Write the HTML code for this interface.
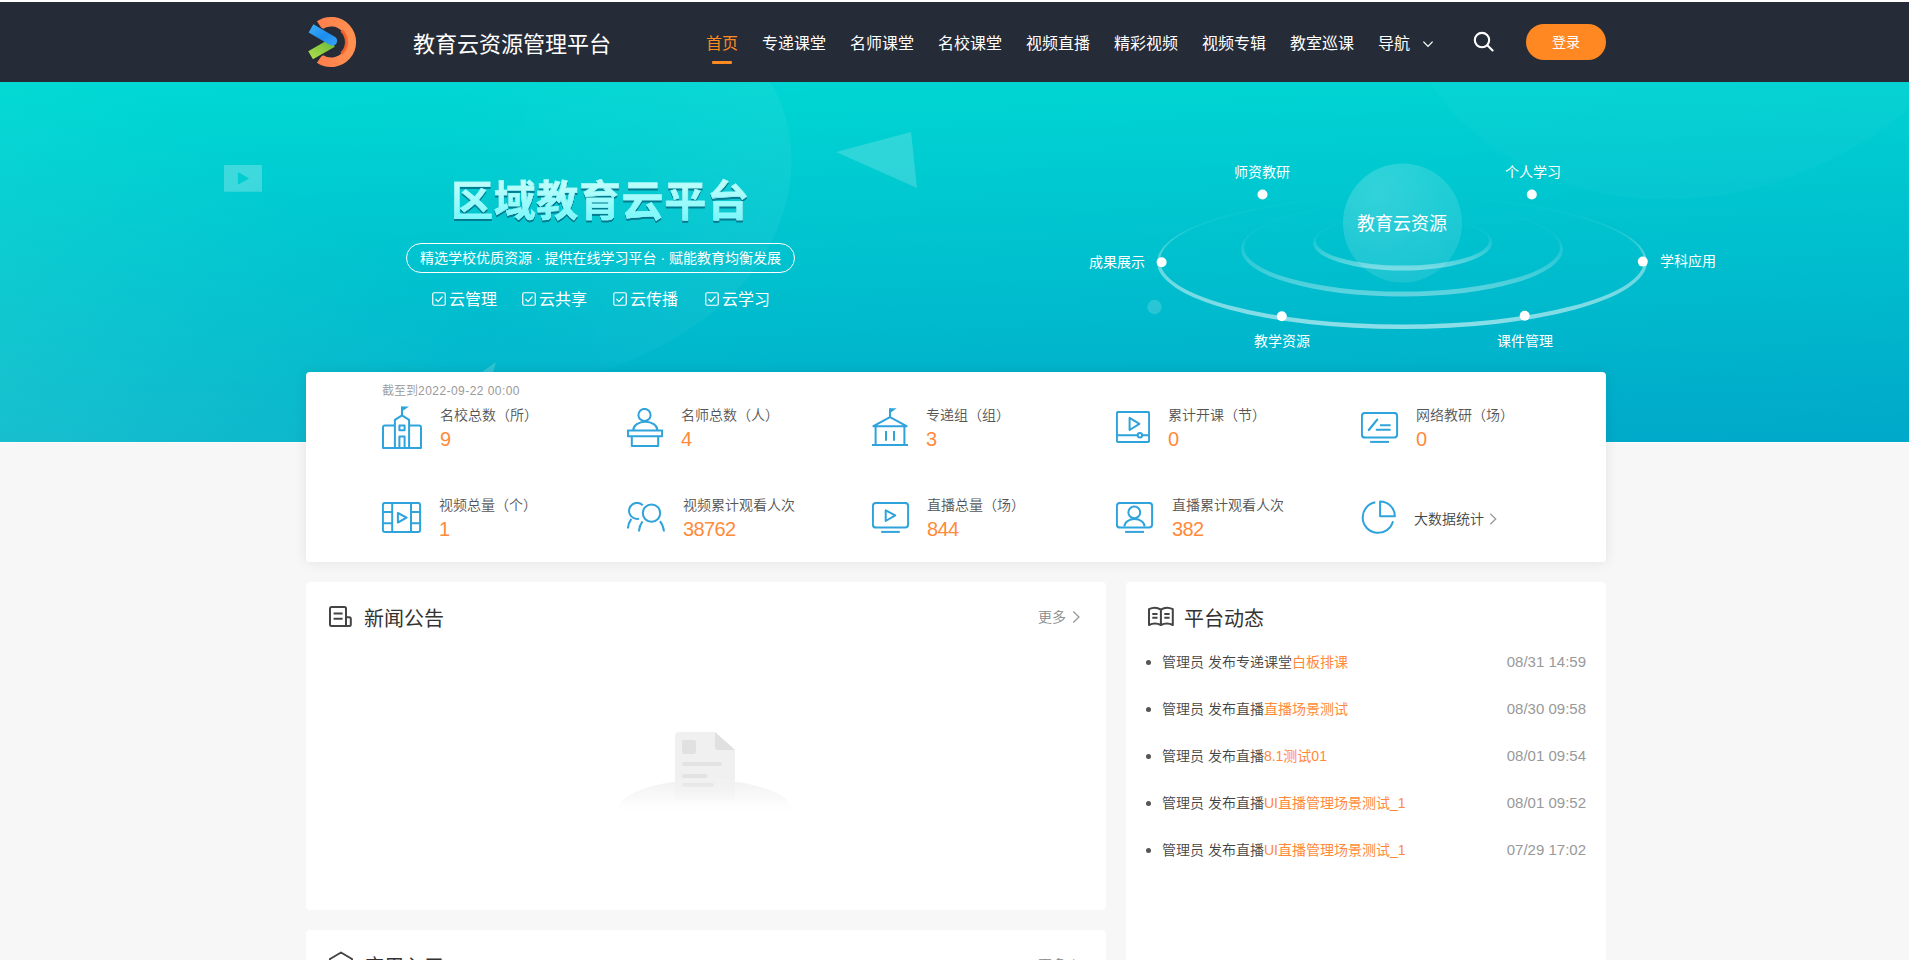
<!DOCTYPE html>
<html lang="zh-CN">
<head>
<meta charset="utf-8">
<title>教育云资源管理平台</title>
<style>
*{box-sizing:border-box;margin:0;padding:0}
html,body{width:1909px;height:960px;overflow:hidden;background:#f7f7f7}
body{position:relative;font-family:"Liberation Sans","Noto Sans CJK SC",sans-serif;color:#333;font-size:14px}
.abs{position:absolute}
#hdr{position:absolute;left:0;top:2px;width:1909px;height:80px;background:#252b37}
#topline{position:absolute;left:0;top:0;width:1909px;height:2px;background:#fff}
#title{position:absolute;left:413px;top:3px;height:80px;line-height:80px;font-size:22px;color:#fff;white-space:nowrap}
.nav{position:absolute;top:2px;height:80px;line-height:80px;font-size:16px;color:#fff;white-space:nowrap}
.nav.on{color:#ff8a22}
#navline{position:absolute;left:712px;top:59px;width:20px;height:3px;background:#ff8a22;border-radius:1px}
#login{position:absolute;left:1526px;top:22px;width:80px;height:36px;border-radius:18px;background:#ff8822;color:#fff;font-size:14px;line-height:36px;text-align:center}
#banner{position:absolute;left:0;top:82px;width:1909px;height:360px;overflow:hidden;background:linear-gradient(32deg,rgba(120,255,220,.2) 0%,rgba(120,255,220,.07) 17%,rgba(120,255,220,0) 28%),linear-gradient(178deg,#00d9d4 0%,#00a8c9 100%)}
#btitle{position:absolute;left:451px;top:92px;font-size:42px;font-weight:700;line-height:56px;white-space:nowrap;letter-spacing:.65px;color:#a0fbfa;background:linear-gradient(180deg,#bcfdfb 12px,#78f7fb 46px);-webkit-background-clip:text;background-clip:text;-webkit-text-fill-color:transparent;-webkit-text-stroke:.5px #9afafb;filter:drop-shadow(.5px 2.200px 0 rgba(0,70,100,.6))}
#pill{position:absolute;left:406px;top:161px;width:389px;height:30px;border:1px solid #fff;border-radius:15px;color:#fff;font-size:14px;line-height:28px;text-align:center;white-space:nowrap}
.ck{position:absolute;top:205.500px;height:24px;line-height:24px;font-size:16px;color:#fff;white-space:nowrap}
.lbl{position:absolute;font-size:14px;line-height:20px;color:#fff;white-space:nowrap}
.dot{position:absolute;width:10px;height:10px;border-radius:50%;background:#fff}
#stats{position:absolute;left:306px;top:372px;width:1300px;height:190px;background:#fff;border-radius:4px;box-shadow:0 0 14px rgba(0,0,0,.085)}
.card{position:absolute;background:#fff;border-radius:4px}
.st-t{position:absolute;font-weight:350;font-size:14px;line-height:20px;color:#555;white-space:nowrap}
.st-n{position:absolute;font-size:20px;letter-spacing:-.6px;line-height:24px;color:#ff8a3a;white-space:nowrap}
.ico{position:absolute}
.h2{position:absolute;font-size:20px;line-height:28px;color:#333;white-space:nowrap}
.more{position:absolute;font-weight:350;font-size:14px;line-height:20px;color:#888;white-space:nowrap}
.li{position:absolute;left:36px;font-weight:350;font-size:14px;line-height:20px;color:#444;white-space:nowrap}
.li b{font-weight:400;color:#ff8a3a}
.li:before{content:"";position:absolute;left:-16.500px;top:8px;width:5px;height:5px;border-radius:50%;background:#555}
.tm{position:absolute;right:20px;font-size:15px;line-height:20px;color:#999;white-space:nowrap}
</style>
</head>
<body>
<div id="topline"></div>
<div id="hdr">
  <svg class="abs" style="left:304px;top:12px" width="60" height="60" viewBox="304 14 60 60">
    <defs>
      <linearGradient id="gO" x1="0" y1="0" x2="1" y2="0"><stop offset="0" stop-color="#ff7f4d"/><stop offset="1" stop-color="#ff9050"/></linearGradient>
      <linearGradient id="gB" x1="0" y1="0" x2="1" y2="1"><stop offset="0" stop-color="#3fb0f7"/><stop offset=".55" stop-color="#1c8def"/><stop offset="1" stop-color="#3aa5f5"/></linearGradient>
      <linearGradient id="gG" x1="0" y1="1" x2="1" y2="0"><stop offset="0" stop-color="#a6da48"/><stop offset="1" stop-color="#6fbb3a"/></linearGradient>
    </defs>
    <path d="M319.6 25.2 A20.3 20.3 0 1 1 319.6 58.8" fill="none" stroke="url(#gO)" stroke-width="9.6"/>
    <path d="M341.5 30.5 A15.6 15.6 0 0 1 341.5 53.5" fill="none" stroke="#f9642c" stroke-width="3.2" opacity=".9"/>
    <path d="M310.6 55.3 L331.5 43.2" fill="none" stroke="#252b37" stroke-width="12.6"/>
    <path d="M312.4 22.5 L335.6 35.9 A5.9 5.9 0 0 1 329.6 46.2 L306.4 32.8 Z" fill="#252b37"/>
    <path d="M310.6 55.3 L332.5 42.6" fill="none" stroke="url(#gG)" stroke-width="9.4"/>
    <path d="M313.4 24.2 L334.8 36.7 A4.7 4.7 0 0 1 330 44.9 L308.6 32.4 Z" fill="url(#gB)"/>
  </svg>
  <svg class="abs" style="left:1470px;top:26px" width="28" height="28" viewBox="1470 28 28 28"><circle cx="1482" cy="40.1" r="7.2" fill="none" stroke="#fff" stroke-width="2.1"/><path d="M1487.3 45.2L1492.6 50.4" stroke="#fff" stroke-width="2.1" stroke-linecap="round"/></svg>
  <svg class="abs" style="left:1420px;top:36px" width="16" height="12" viewBox="1420 38 16 12"><path d="M1423.4 41.6L1428 46.4L1432.6 41.6" fill="none" stroke="#fff" stroke-width="1.3"/></svg>
  <div id="title">教育云资源管理平台</div>
  <div class="nav on" style="left:706px">首页</div>
  <div class="nav" style="left:762px">专递课堂</div>
  <div class="nav" style="left:850px">名师课堂</div>
  <div class="nav" style="left:938px">名校课堂</div>
  <div class="nav" style="left:1026px">视频直播</div>
  <div class="nav" style="left:1114px">精彩视频</div>
  <div class="nav" style="left:1202px">视频专辑</div>
  <div class="nav" style="left:1290px">教室巡课</div>
  <div class="nav" style="left:1378px">导航</div>
  <div id="navline"></div>
  <div id="login">登录</div>
</div>
<div id="banner">
  <svg class="abs" style="left:0;top:0" width="1909" height="360" viewBox="0 82 1909 360">
    <defs>
      <linearGradient id="blob" x1="0" y1="0" x2="1" y2="0"><stop offset="0" stop-color="#fff" stop-opacity="0"/><stop offset=".5" stop-color="#fff" stop-opacity=".0"/><stop offset="1" stop-color="#fff" stop-opacity=".05"/></linearGradient>
      <linearGradient id="ringO" x1="0" y1="0" x2="0" y2="1"><stop offset="0" stop-color="#fff" stop-opacity="0"/><stop offset=".2" stop-color="#fff" stop-opacity=".05"/><stop offset=".55" stop-color="#fff" stop-opacity=".4"/><stop offset="1" stop-color="#fff" stop-opacity=".55"/></linearGradient>
      <linearGradient id="ringM" x1="0" y1="0" x2="0" y2="1"><stop offset="0" stop-color="#fff" stop-opacity="0"/><stop offset=".35" stop-color="#fff" stop-opacity=".04"/><stop offset="1" stop-color="#fff" stop-opacity=".38"/></linearGradient>
      <radialGradient id="sph" cx=".3" cy=".25" r=".85"><stop offset="0" stop-color="#fff" stop-opacity=".2"/><stop offset=".6" stop-color="#fff" stop-opacity=".13"/><stop offset="1" stop-color="#fff" stop-opacity=".1"/></radialGradient>
      <linearGradient id="ringI" x1="0" y1="0" x2="0" y2="1"><stop offset="0" stop-color="#fff" stop-opacity="0"/><stop offset=".4" stop-color="#fff" stop-opacity=".05"/><stop offset="1" stop-color="#fff" stop-opacity=".42"/></linearGradient>
      <filter id="soft" x="-5%" y="-5%" width="110%" height="110%"><feGaussianBlur stdDeviation=".7"/></filter>
    </defs>
    <path d="M770 82 C800 130 800 200 760 262 C700 350 560 400 430 400 C250 400 110 330 100 210 C95 150 130 100 170 82 Z" fill="url(#blob)"/>
    <path d="M1430 82 C1500 200 1720 260 1909 110 L1909 82 Z" fill="#fff" opacity=".025"/>
    <path fill-rule="evenodd" d="M224 165 H262 V191.800 H224 Z M238.800 172.600 Q237.900 172.100 237.900 173.200 V183.700 Q237.900 184.800 238.800 184.300 L248.300 178.900 Q249 178.450 248.300 178 Z" fill="#fff" opacity=".24"/>
    <path d="M836 152 L911 132 L917 188 Z" fill="#fff" opacity=".18"/>
    <path d="M482 372 L496 362 L493 372 Z" fill="#fff" opacity=".18"/>
    <circle cx="1154.500" cy="307" r="7.200" fill="#fff" opacity=".16"/>
    <g filter="url(#soft)">
    <path fill-rule="evenodd" fill="url(#ringO)" d="M1157 262 a245 67 0 1 0 490 0 a245 67 0 1 0 -490 0 Z M1160 260.750 a242 63.750 0 1 0 484 0 a242 63.750 0 1 0 -484 0 Z"/>
    <path fill-rule="evenodd" fill="url(#ringM)" d="M1241 249 a161 47.500 0 1 0 322 0 a161 47.500 0 1 0 -322 0 Z M1244 247.500 a158 44 0 1 0 316 0 a158 44 0 1 0 -316 0 Z"/>
    </g>
    <circle cx="1402.500" cy="223" r="59.500" fill="url(#sph)"/>
    <g filter="url(#soft)">
    <path fill-rule="evenodd" fill="url(#ringI)" d="M1313 242.500 a89.500 28 0 1 0 179 0 a89.500 28 0 1 0 -179 0 Z M1316 241 a86.500 24.500 0 1 0 173 0 a86.500 24.500 0 1 0 -173 0 Z"/>
    </g>
    <g fill="#fff"><circle cx="1262.500" cy="194.500" r="5"/><circle cx="1531.800" cy="194.500" r="5"/><circle cx="1161.600" cy="262.200" r="5"/><circle cx="1642.800" cy="261.600" r="5"/><circle cx="1281.800" cy="316.300" r="5"/><circle cx="1524.700" cy="315.800" r="5"/></g>
  </svg>
  <div class="lbl" style="left:1202px;width:120px;text-align:center;top:80px">师资教研</div>
  <div class="lbl" style="left:1473px;width:120px;text-align:center;top:80px">个人学习</div>
  <div class="lbl" style="left:1000px;width:145px;text-align:right;top:170px">成果展示</div>
  <div class="lbl" style="left:1660px;top:169px">学科应用</div>
  <div class="lbl" style="left:1222px;width:120px;text-align:center;top:249px">教学资源</div>
  <div class="lbl" style="left:1465px;width:120px;text-align:center;top:249px">课件管理</div>
  <div class="lbl" style="left:1342px;width:120px;text-align:center;top:129px;font-size:18px;line-height:26px">教育云资源</div>
  <div id="btitle">区域教育云平台</div>
  <div id="pill">精选学校优质资源 · 提供在线学习平台 · 赋能教育均衡发展</div>
  <div class="ck" style="left:432px"><svg width="14" height="14" viewBox="0 0 14 14" style="vertical-align:-1px;margin-right:3px"><rect x=".75" y=".75" width="12.500" height="12.500" rx="1.500" fill="none" stroke="#fff" stroke-width="1.200"/><path d="M3.500 7 L6 9.600 L10.500 4.500" fill="none" stroke="#fff" stroke-width="1.200"/></svg>云管理</div>
  <div class="ck" style="left:522px"><svg width="14" height="14" viewBox="0 0 14 14" style="vertical-align:-1px;margin-right:3px"><rect x=".75" y=".75" width="12.500" height="12.500" rx="1.500" fill="none" stroke="#fff" stroke-width="1.200"/><path d="M3.500 7 L6 9.600 L10.500 4.500" fill="none" stroke="#fff" stroke-width="1.200"/></svg>云共享</div>
  <div class="ck" style="left:613px"><svg width="14" height="14" viewBox="0 0 14 14" style="vertical-align:-1px;margin-right:3px"><rect x=".75" y=".75" width="12.500" height="12.500" rx="1.500" fill="none" stroke="#fff" stroke-width="1.200"/><path d="M3.500 7 L6 9.600 L10.500 4.500" fill="none" stroke="#fff" stroke-width="1.200"/></svg>云传播</div>
  <div class="ck" style="left:705px"><svg width="14" height="14" viewBox="0 0 14 14" style="vertical-align:-1px;margin-right:3px"><rect x=".75" y=".75" width="12.500" height="12.500" rx="1.500" fill="none" stroke="#fff" stroke-width="1.200"/><path d="M3.500 7 L6 9.600 L10.500 4.500" fill="none" stroke="#fff" stroke-width="1.200"/></svg>云学习</div>
</div>
<div class="abs" style="left:0;top:442px;width:1909px;height:1px;background:#fdfbfa"></div>
<div id="stats">
  <svg class="ico" style="left:76px;top:34px" width="40" height="44" viewBox="0 0 40 44" fill="none" stroke="#2fa3dc" stroke-width="2" stroke-linejoin="round"><path d="M20 0.500 L27 0.500 L21.700 4.200 L20 4.200 Z" fill="#2fa3dc" stroke="none"/><path d="M20 0.500 V9.500"/><path d="M12.900 42 V13.900 L20 9.300 L27.100 13.900 V42"/><path d="M12.900 19.600 H2.900 Q1 19.600 1 21.500 V42 H39 V21.500 Q39 19.600 37.100 19.600 H27.100"/><rect x="17.400" y="19.600" width="5.200" height="4.600"/><path d="M17.400 42 V30.600 H22.600 V42"/></svg>
  <svg class="ico" style="left:321px;top:36px" width="36" height="40" viewBox="0 0 36 40" fill="none" stroke="#2fa3dc" stroke-width="2" stroke-linejoin="round"><circle cx="17.500" cy="7" r="6.100"/><path d="M6.300 22 A11.600 8 0 0 1 30.300 22"/><rect x="0.900" y="22.400" width="34.200" height="5.800"/><path d="M4.800 28.200 V38.100 H31.200 V28.200"/></svg>
  <svg class="ico" style="left:566px;top:36px" width="36" height="39" viewBox="0 0 36 39" fill="none" stroke="#2fa3dc" stroke-width="2" stroke-linejoin="round"><path d="M18 0.200 L24.600 0.200 L19.600 3.900 L18 3.900 Z" fill="#2fa3dc" stroke="none"/><path d="M18 0.200 V9"/><path d="M18 9.200 L1.400 18.200 H34.600 Z"/><path d="M3.600 18.200 V37 M32.400 18.200 V37 M0 37.100 H36 M14 23 V32.700 M22 23 V32.700"/></svg>
  <svg class="ico" style="left:810px;top:39px" width="34" height="33" viewBox="0 0 34 33" fill="none" stroke="#2fa3dc" stroke-width="2" stroke-linejoin="round"><rect x="0.900" y="0.900" width="32.200" height="30.200" rx="1.600"/><path d="M13.600 6.800 V19 L23.400 12.900 Z"/><path d="M1 24.200 H21.600 M26.200 24.200 H33"/><circle cx="23.900" cy="24.200" r="2.200"/></svg>
  <svg class="ico" style="left:1055px;top:40px" width="38" height="32" viewBox="0 0 38 32" fill="none" stroke="#2fa3dc" stroke-width="2" stroke-linejoin="round"><rect x="0.900" y="0.900" width="35.200" height="24.600" rx="3"/><path d="M9.100 29.900 H28" stroke-width="2"/><path d="M7.800 18 L16.200 7.600" stroke-width="2.200" stroke-linecap="round"/><path d="M19 13.200 H29.600 M14.800 17.800 H29.600" stroke-width="2"/></svg>
  <svg class="ico" style="left:76px;top:130px" width="40" height="32" viewBox="0 0 40 32" fill="none" stroke="#2fa3dc" stroke-width="2" stroke-linejoin="round"><rect x="0.900" y="0.900" width="37.200" height="29.200" rx="2"/><path d="M10.200 1 V30 M29 1 V30 M1 10 H10.200 M1 21.300 H10.200 M29 10 H38 M29 21.300 H38"/><path d="M15.900 11 V20.500 L24.600 15.700 Z" stroke-width="2"/></svg>
  <svg class="ico" style="left:321px;top:130px" width="39" height="31" viewBox="0 0 39 31" fill="none" stroke="#2fa3dc" stroke-width="2" stroke-linejoin="round"><circle cx="24.500" cy="11.100" r="8.700"/><path d="M15.700 3.200 A8 8 0 1 0 12.200 16.600"/><path d="M11.900 29.500 Q12.400 23.500 15.500 19.400 M37 29.500 Q36.400 23.500 33 19.200 M0.900 26.500 Q1.400 20.800 4.300 16.800" stroke-linecap="butt"/></svg>
  <svg class="ico" style="left:566px;top:130px" width="38" height="32" viewBox="0 0 38 32" fill="none" stroke="#2fa3dc" stroke-width="2" stroke-linejoin="round"><rect x="0.900" y="0.900" width="35.200" height="24.600" rx="3"/><path d="M9.200 29.900 H27.800" stroke-width="2"/><path d="M13.700 8.400 V19 L23.300 13.400 Z" stroke-width="2"/></svg>
  <svg class="ico" style="left:810px;top:130px" width="38" height="32" viewBox="0 0 38 32" fill="none" stroke="#2fa3dc" stroke-width="2" stroke-linejoin="round"><rect x="0.900" y="0.900" width="35.200" height="24.600" rx="3"/><path d="M9.100 29.900 H28" stroke-width="2"/><circle cx="18.300" cy="10.400" r="5.900"/><path d="M8.400 24.600 A10.100 7.600 0 0 1 28.600 24.600"/></svg>
  <svg class="ico" style="left:1055px;top:128px" width="36" height="35" viewBox="0 0 36 35" fill="none" stroke="#2fa3dc" stroke-width="2" stroke-linejoin="round"><path d="M14.300 2.300 A15.400 15.400 0 1 0 32 21.200"/><path d="M19.100 1.500 A14.800 14.800 0 0 1 33.900 16.300 H19.100 Z"/></svg>
  <div class="st-t" style="left:76px;top:11px;font-size:12px;line-height:16px;color:#999">截至到<span style="letter-spacing:.45px">2022-09-22 00:00</span></div>
  <div class="st-t" style="left:134px;top:33px">名校总数（所）</div><div class="st-n" style="left:134px;top:55px">9</div>
  <div class="st-t" style="left:375px;top:33px">名师总数（人）</div><div class="st-n" style="left:375px;top:55px">4</div>
  <div class="st-t" style="left:620px;top:33px">专递组（组）</div><div class="st-n" style="left:620px;top:55px">3</div>
  <div class="st-t" style="left:862px;top:33px">累计开课（节）</div><div class="st-n" style="left:862px;top:55px">0</div>
  <div class="st-t" style="left:1110px;top:33px">网络教研（场）</div><div class="st-n" style="left:1110px;top:55px">0</div>
  <div class="st-t" style="left:133px;top:123px">视频总量（个）</div><div class="st-n" style="left:133px;top:145px">1</div>
  <div class="st-t" style="left:377px;top:123px">视频累计观看人次</div><div class="st-n" style="left:377px;top:145px">38762</div>
  <div class="st-t" style="left:621px;top:123px">直播总量（场）</div><div class="st-n" style="left:621px;top:145px">844</div>
  <div class="st-t" style="left:866px;top:123px">直播累计观看人次</div><div class="st-n" style="left:866px;top:145px">382</div>
  <div class="st-t" style="left:1108px;top:137px;color:#444">大数据统计</div>
  <svg class="ico" style="left:1182px;top:140px" width="10" height="14" viewBox="0 0 10 14"><path d="M2.300 1.700 L7.700 7 L2.300 12.300" fill="none" stroke="#999" stroke-width="1.300"/></svg>
</div>
<div class="card" id="news" style="left:306px;top:582px;width:800px;height:328px">
  <svg class="ico" style="left:22px;top:23px" width="25" height="23" viewBox="-1 -1 25 23" fill="none" stroke="#444" stroke-width="2" stroke-linejoin="round"><path d="M17 20 H2.500 Q1 20 1 18.500 V2.500 Q1 1 2.500 1 H15.500 Q17 1 17 2.500 V20 H20.300 Q21.800 20 21.800 18.500 V12.800 Q21.800 11.300 20.300 11.300 H17"/><path d="M4.600 7.500 H13.600 M4.600 12.700 H13.600"/></svg>
  <div class="h2" style="left:58px;top:23px">新闻公告</div>
  <div class="more" style="left:732px;top:25px">更多</div>
  <svg class="ico" style="left:765px;top:28px" width="10" height="14" viewBox="0 0 10 14"><path d="M2.300 1.500 L8 7 L2.300 12.500" fill="none" stroke="#999" stroke-width="1.300"/></svg>
  <svg class="ico" style="left:300px;top:140px" width="200" height="100" viewBox="606 722 200 100">
    <defs>
      <linearGradient id="gnd" x1="0" y1="0" x2="0" y2="1"><stop offset="0" stop-color="#f2f2f2"/><stop offset="1" stop-color="#fff"/></linearGradient>
      <linearGradient id="docm" x1="0" y1="0" x2="0" y2="1"><stop offset="0" stop-color="#fff"/><stop offset=".56" stop-color="#fff"/><stop offset=".8" stop-color="#000"/><stop offset="1" stop-color="#000"/></linearGradient>
      <mask id="dm"><rect x="606" y="722" width="200" height="100" fill="url(#docm)"/></mask>
    </defs>
    <path d="M617 811 A88 31 0 0 1 793 811 Z" fill="url(#gnd)"/>
    <g mask="url(#dm)">
      <path d="M679 732 H715 L735 750 V800 H675 V736 Q675 732 679 732 Z" fill="#f0f0f0"/>
      <path d="M715 732 L735 750 H718 Q715 750 715 747 Z" fill="#e0e0e0"/>
      <rect x="682" y="740" width="14" height="14" rx="2" fill="#e1e1e1"/>
      <rect x="682" y="762" width="40" height="4" rx="2" fill="#e3e3e3"/>
      <rect x="682" y="774" width="25.500" height="4" rx="2" fill="#e3e3e3"/>
      <rect x="682" y="783" width="32" height="4" rx="2" fill="#e3e3e3"/>
    </g>
  </svg>
</div>
<div class="card" id="app" style="left:306px;top:930px;width:800px;height:60px">
  <svg class="ico" style="left:22px;top:21px" width="26" height="26" viewBox="0 0 26 26" fill="none" stroke="#444" stroke-width="2" stroke-linejoin="round"><path d="M13 1.500 L24 8 V21 L13 24.500 L2 21 V8 Z"/></svg>
  <div class="h2" style="left:58px;top:23px">应用入口</div>
  <div class="more" style="left:732px;top:25px">更多</div>
  <svg class="ico" style="left:765px;top:28px" width="10" height="14" viewBox="0 0 10 14"><path d="M2.300 1.500 L8 7 L2.300 12.500" fill="none" stroke="#999" stroke-width="1.300"/></svg>
</div>
<div class="card" id="dyn" style="left:1126px;top:582px;width:480px;height:400px">
  <svg class="ico" style="left:21px;top:24px" width="28" height="21" viewBox="-1 -1 28 21" fill="none" stroke="#444" stroke-width="2" stroke-linejoin="round"><path d="M12.900 2.600 C9.500 0.400 4.500 0.400 1 2.200 V18 C4.500 16.200 9.500 16.200 12.900 18 C16.300 16.200 21.300 16.200 24.800 18 V2.200 C21.300 0.400 16.300 0.400 12.900 2.600 Z M12.900 2.600 V18"/><path d="M4.300 6.900 H9.500 M4.300 10.800 H9.500 M16.300 6.900 H21.600 M16.300 10.800 H21.600"/></svg>
  <div class="h2" style="left:58px;top:23px">平台动态</div>
  <div class="li" style="top:70px">管理员 发布专递课堂<b>白板排课</b></div><div class="tm" style="top:70px">08/31 14:59</div>
  <div class="li" style="top:117px">管理员 发布直播<b>直播场景测试</b></div><div class="tm" style="top:117px">08/30 09:58</div>
  <div class="li" style="top:164px">管理员 发布直播<b>8.1测试01</b></div><div class="tm" style="top:164px">08/01 09:54</div>
  <div class="li" style="top:211px">管理员 发布直播<b>UI直播管理场景测试_1</b></div><div class="tm" style="top:211px">08/01 09:52</div>
  <div class="li" style="top:258px">管理员 发布直播<b>UI直播管理场景测试_1</b></div><div class="tm" style="top:258px">07/29 17:02</div>
</div>
</body>
</html>
